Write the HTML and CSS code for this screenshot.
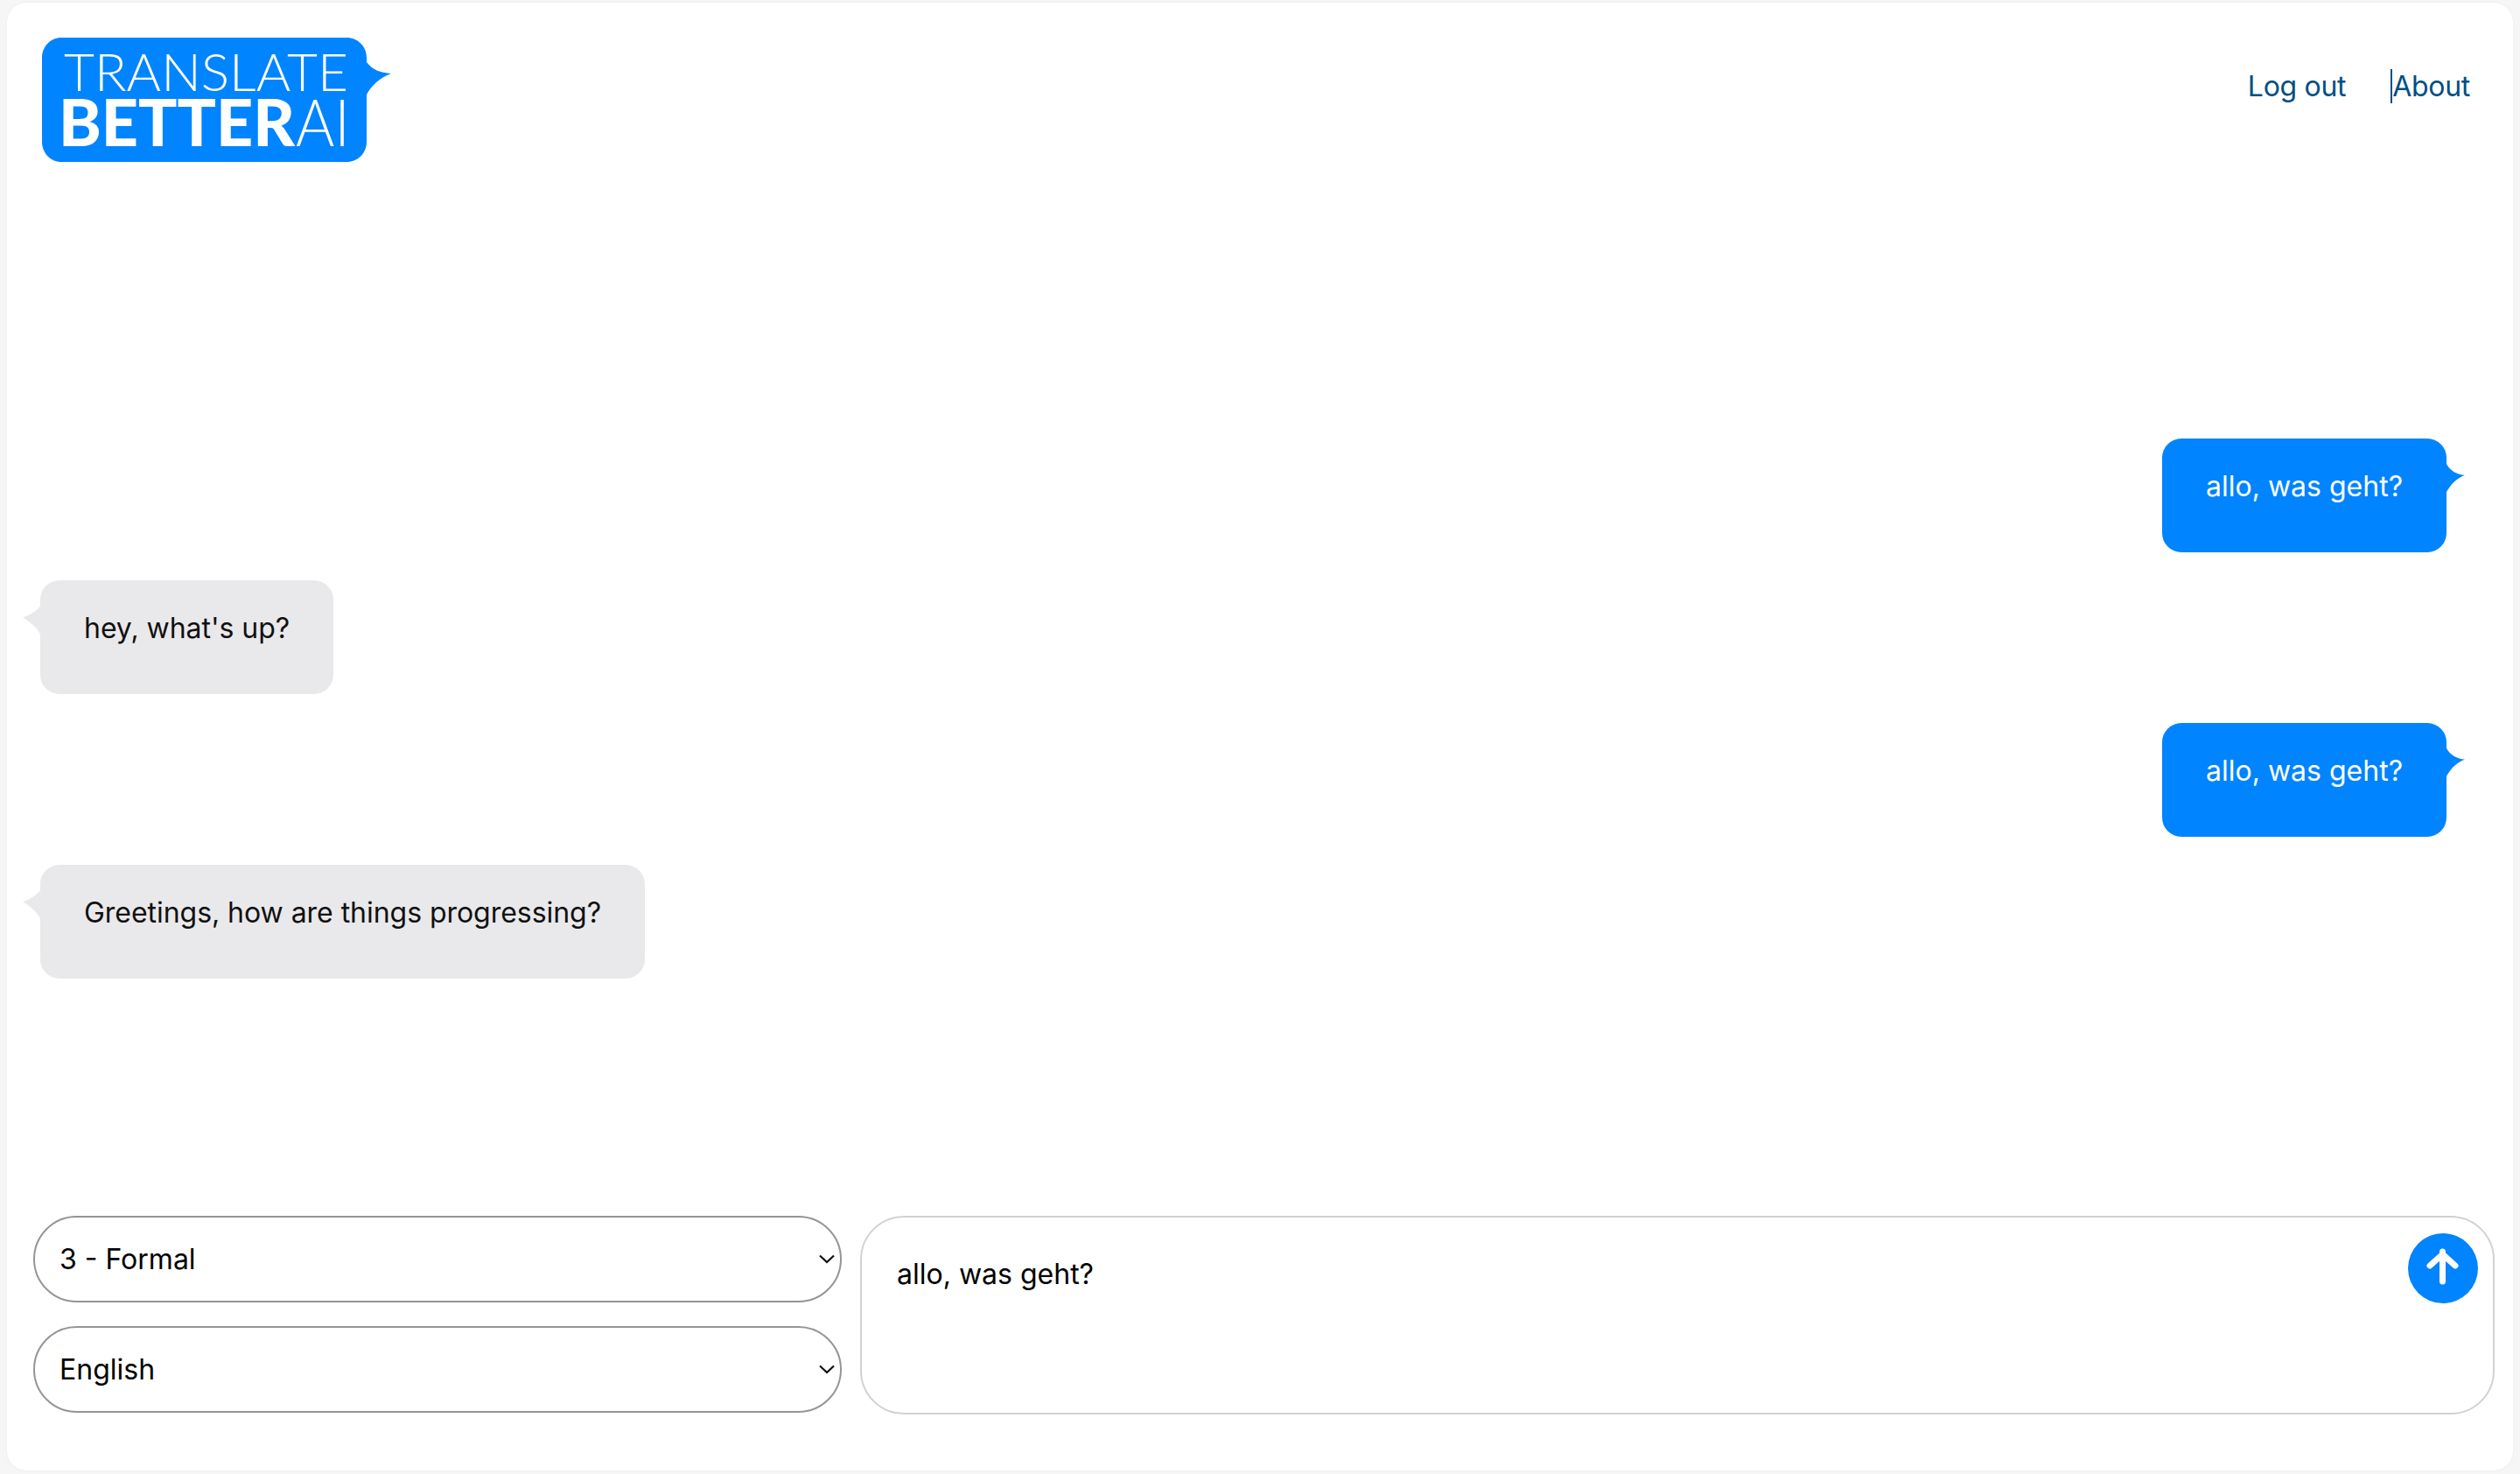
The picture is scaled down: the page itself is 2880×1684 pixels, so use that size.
FILE: index.html
```html
<!DOCTYPE html>
<html lang="en">
<head>
    <meta charset="UTF-8">
    <meta name="viewport" content="width=device-width, initial-scale=1.0">
    <title>Translate Better AI</title>
    <link rel="stylesheet" href="styles.css">
</head>
<body>
    <div class="app-card">
        <header class="app-header">
            <a class="logo" href="#">
                <svg width="400" height="142" viewBox="0 0 400 142">
                    <path class="logo-shape" d="M22 0H348C361 0 371 10 371 23V28C378 37 386 40 399 41C386 46 377 54 371 65V119C371 132 361 142 348 142H22C10 142 0 132 0 119V23C0 10 10 0 22 0Z"/>
                    <text class="logo-top" x="25" y="61" textLength="325" lengthAdjust="spacingAndGlyphs">TRANSLATE</text>
                    <text class="logo-bottom" x="19" y="124" textLength="270" lengthAdjust="spacingAndGlyphs">BETTER</text>
                    <text class="logo-ai" x="290" y="124" textLength="62" lengthAdjust="spacingAndGlyphs">AI</text>
                </svg>
            </a>
            <nav class="app-nav">
                <a href="#">Log out</a>
                <a class="nav-about" href="#">About</a>
            </nav>
        </header>

        <main class="messages">
            <div class="bubble sent">allo, was geht?</div>
            <div class="bubble received">hey, what's up?</div>
            <div class="bubble sent">allo, was geht?</div>
            <div class="bubble received">Greetings, how are things progressing?</div>
        </main>

        <form class="composer">
            <div class="selects">
                <select class="picker">
                    <option>3 - Formal</option>
                </select>
                <select class="picker">
                    <option>English</option>
                </select>
            </div>
            <div class="input-wrap">
                <textarea class="message-input">allo, was geht?</textarea>
                <button class="send-btn" type="button" aria-label="Send">
                    <svg width="80" height="80" viewBox="0 0 80 80">
                        <path d="M39.5 55V21M25 37L39.5 24L54 37" fill="none" stroke="#fff" stroke-width="7" stroke-linecap="round" stroke-linejoin="round"/>
                    </svg>
                </button>
            </div>
        </form>
    </div>
</body>
</html>
```

FILE: styles.css
```css
* {
    margin: 0;
    padding: 0;
    box-sizing: border-box;
}

body {
    font-family: Inter, "Liberation Sans", sans-serif;
    background: #f6f6f6;
    height: 1684px;
    padding: 3px 8px 4px;
}

.app-card {
    height: 100%;
    background: #fff;
    border-radius: 22px;
    box-shadow: 0 0 2px rgba(0, 0, 0, 0.08);
    display: flex;
    flex-direction: column;
    padding: 40px 21px 0 30px;
}

.app-header {
    display: flex;
    justify-content: space-between;
    align-items: flex-start;
    padding-left: 10px;
}

.logo {
    display: block;
    height: 142px;
}

.logo-shape {
    fill: #0084ff;
}

.logo-top,
.logo-bottom,
.logo-ai {
    fill: #fff;
    font-family: Lato, sans-serif;
}

.logo-top {
    font-size: 60px;
    font-weight: 300;
}

.logo-bottom {
    font-size: 75px;
    font-weight: 900;
}

.logo-ai {
    font-size: 75px;
    font-weight: 300;
}

.app-nav {
    display: flex;
    gap: 51px;
    margin-top: 36px;
    margin-right: 28px;
}

.app-nav a {
    font-size: 32px;
    line-height: 39px;
    letter-spacing: -0.3px;
    color: #004f82;
    text-decoration: none;
}

.nav-about {
    border-left: 2px solid #004f82;
}

.messages {
    flex: 1;
    display: flex;
    flex-direction: column;
    align-items: flex-start;
    gap: 32.4px;
    padding: 316px 55px 0 8px;
}

.bubble {
    position: relative;
    height: 130px;
    padding: 31px 50px 0;
    border-radius: 22px;
    font-size: 32px;
    line-height: 48px;
}

.bubble::after {
    content: "";
    position: absolute;
    top: 29px;
    width: 21px;
    height: 32px;
}

.sent {
    align-self: flex-end;
    background: #0084ff;
    color: #fff;
}

.sent::after {
    right: -21px;
    background: #0084ff;
    clip-path: path("M0 0C4 8 12 12 21 13C12 16 5 23 0 32Z");
}

.received {
    background: #e9e9eb;
    color: #111;
    letter-spacing: -0.04px;
}

.received::after {
    left: -20px;
    background: #e9e9eb;
    clip-path: path("M20 0C15 6 7 11 0 13C7 17 15 23 20 32Z");
}

.composer {
    display: flex;
    gap: 21px;
    height: 291px;
}

.selects {
    width: 924px;
    display: flex;
    flex-direction: column;
    gap: 27px;
}

.picker {
    appearance: none;
    height: 99px;
    padding: 0 40px 0 28px;
    border: 2px solid #959595;
    border-radius: 50px;
    background: #fff url("data:image/svg+xml,%3Csvg xmlns='http://www.w3.org/2000/svg' width='18' height='11' viewBox='0 0 18 11'%3E%3Cpath d='M1 1.5L9 9L17 1.5' fill='none' stroke='%23111' stroke-width='2.2'/%3E%3C/svg%3E") no-repeat right 6px center;
    color: #000;
    font-family: inherit;
    font-size: 32px;
}

.input-wrap {
    position: relative;
    flex: 1;
    height: 227px;
}

.message-input {
    display: block;
    width: 100%;
    height: 100%;
    padding: 45px 40px;
    border: 2px solid #d2d2d2;
    border-radius: 50px;
    resize: none;
    outline: none;
    color: #000;
    font-family: inherit;
    font-size: 32px;
    line-height: 40px;
}

.send-btn {
    position: absolute;
    top: 20px;
    right: 19px;
    width: 80px;
    height: 80px;
    border: none;
    border-radius: 50%;
    background: #0084ff;
    cursor: pointer;
}

.send-btn svg {
    display: block;
}
```
